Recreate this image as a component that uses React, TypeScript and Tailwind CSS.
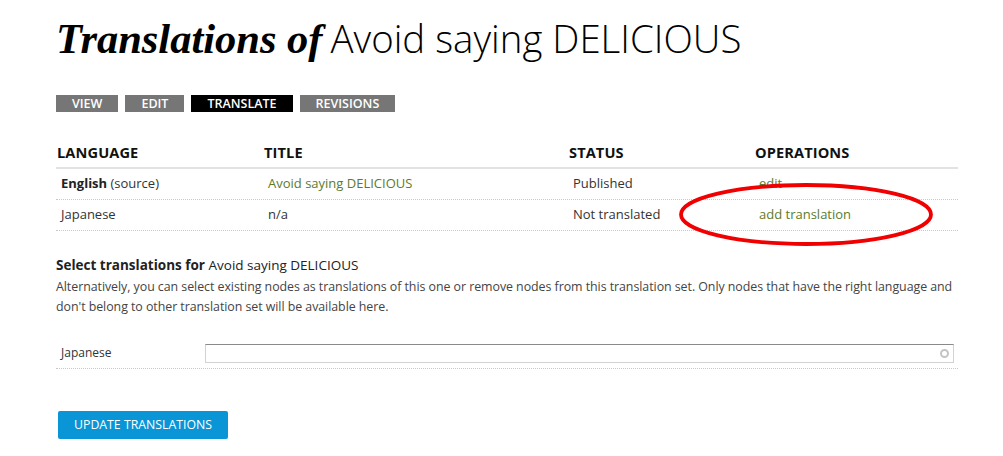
const tabs = [
  { label: "VIEW", active: false },
  { label: "EDIT", active: false },
  { label: "TRANSLATE", active: true },
  { label: "REVISIONS", active: false },
];

const rows = [
  {
    lang: (
      <>
        <span className="font-bold text-[#222]">English</span> (source)
      </>
    ),
    title: "Avoid saying DELICIOUS",
    titleLink: true,
    status: "Published",
    op: "edit",
  },
  {
    lang: "Japanese",
    title: "n/a",
    titleLink: false,
    status: "Not translated",
    op: "add translation",
  },
];

const gridCols = "grid grid-cols-[207px_305px_186px_1fr]";

export default function App() {
  return (
    <div className="relative min-h-[456px] w-[1003px] bg-white font-['Open_Sans',sans-serif] text-[#333]">
      <div className="pl-[56px] pr-[45px] pt-[14px]">
        <h1 className="flex items-baseline gap-[8px] leading-[48px] text-black">
          <span className="font-['Liberation_Serif',serif] text-[42.5px] font-bold italic">
            Translations of
          </span>
          <span className="text-[38.4px] font-light">Avoid saying DELICIOUS</span>
        </h1>

        <ul className="mt-[32px] flex gap-[7px]">
          {tabs.map((t) => (
            <li
              key={t.label}
              className={`h-[17px] px-[16px] text-[12.5px] font-semibold leading-[17px] text-white ${
                t.active ? "bg-black" : "bg-[#767676]"
              }`}
            >
              {t.label}
            </li>
          ))}
        </ul>

        <div className="mt-[26px] w-[902px]">
          <div className={`${gridCols} h-[31px] items-center border-b-2 border-[#e2e2e2] text-[14.6px] font-bold leading-none tracking-[0.1px] text-[#111]`}>
            <div className="pl-[1px]">LANGUAGE</div>
            <div className="pl-[1px]">TITLE</div>
            <div className="pl-[1px]">STATUS</div>
            <div className="pl-[1px]">OPERATIONS</div>
          </div>
          {rows.map((r, i) => (
            <div
              key={i}
              className={`${gridCols} h-[31px] items-center border-b border-dotted border-[#c8c8c8] text-[13px]`}
            >
              <div className="pl-[5px]">{r.lang}</div>
              <div className={`pl-[5px] ${r.titleLink ? "text-[#5d7a2c]" : ""}`}>{r.title}</div>
              <div className="pl-[5px]">{r.status}</div>
              <div className="pl-[5px] text-[#5d7a2c]">{r.op}</div>
            </div>
          ))}
        </div>

        <div className="mt-[25px] w-[902px]">
          <h2 className="text-[13.5px] leading-[18px] text-[#222]">
            <span className="font-bold">Select translations for</span> Avoid saying DELICIOUS
          </h2>
          <p className="mt-[3px] text-[12.4px] leading-[20px] tracking-[-0.05px] text-[#444]">
            Alternatively, you can select existing nodes as translations of this one or remove nodes from this translation set. Only nodes that have the right language and don't belong to other translation set will be available here.
          </p>
        </div>

        <div className="mt-[22px] flex h-[30px] w-[902px] items-center border-b border-dotted border-[#c8c8c8] pb-[1px]">
          <label className="w-[149px] pl-[5px] text-[12px] text-[#333]">Japanese</label>
          <div className="flex h-[19px] w-[749px] items-center justify-end border border-[#d2d2d2] border-t-[#8a8a8a] pr-[4px]">
            <span className="h-[9px] w-[9px] rounded-full border-2 border-[#c4c4c4]" />
          </div>
        </div>

        <button className="mt-[42px] ml-[2px] h-[28px] w-[170px] rounded-[2px] bg-[#0995d6] text-[12.3px] text-white">
          UPDATE TRANSLATIONS
        </button>
      </div>

      {/* red annotation ring around the add translation link */}
      <svg className="pointer-events-none absolute left-[678px] top-[181px]" width="260" height="68">
        <ellipse cx="128" cy="33.5" rx="125" ry="29.5" fill="none" stroke="#f00000" strokeWidth="3.8" />
      </svg>
    </div>
  );
}
